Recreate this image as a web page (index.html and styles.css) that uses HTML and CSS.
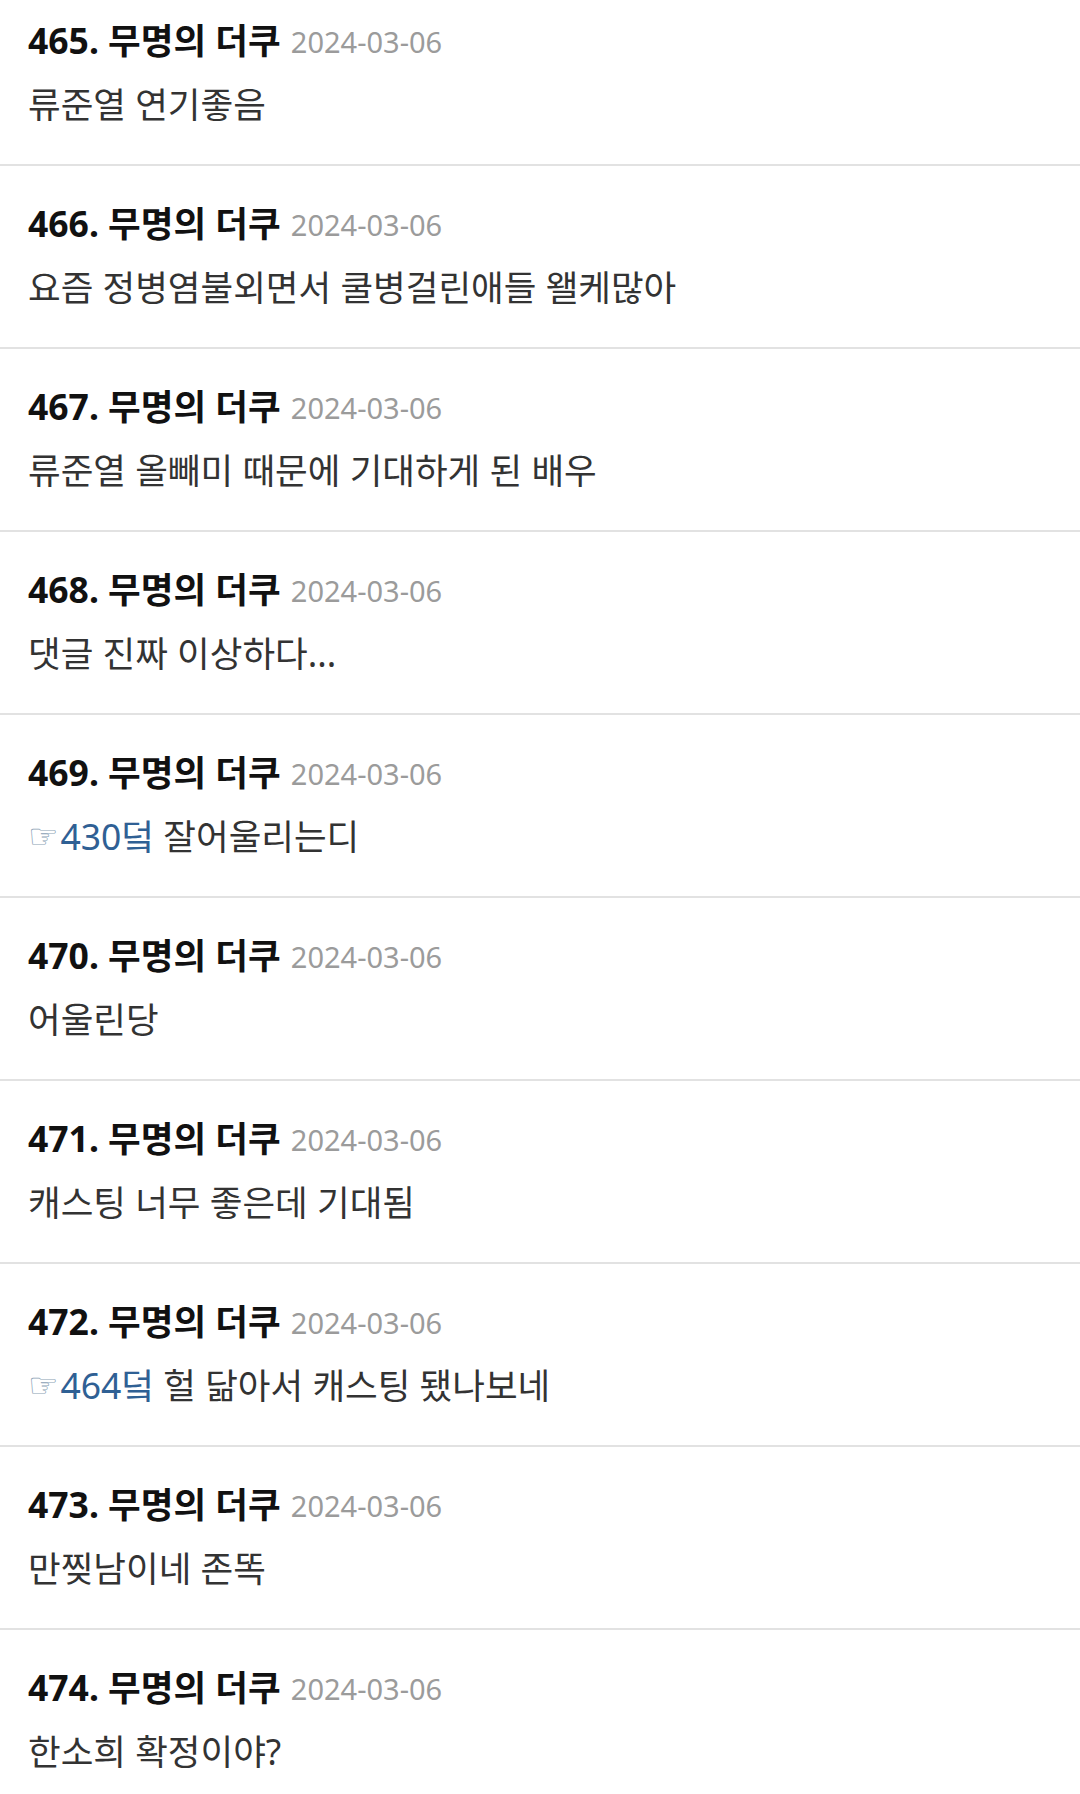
FILE: index.html
```html
<!DOCTYPE html>
<html>
	<head>
		<meta charset="UTF-8">
		<title>댓글</title>
		<link rel="stylesheet" href="styles.css">
	</head>
	<body>
		<div class="comments">
			<ul>
				<li>
					<p class="head"><b>465. 무명의 더쿠</b> <span class="date">2024-03-06</span></p>
					<p class="text">류준열 연기좋음</p>
				</li>
				<li>
					<p class="head"><b>466. 무명의 더쿠</b> <span class="date">2024-03-06</span></p>
					<p class="text">요즘 정병염불외면서 쿨병걸린애들 왤케많아</p>
				</li>
				<li>
					<p class="head"><b>467. 무명의 더쿠</b> <span class="date">2024-03-06</span></p>
					<p class="text">류준열 올빼미 때문에 기대하게 된 배우</p>
				</li>
				<li>
					<p class="head"><b>468. 무명의 더쿠</b> <span class="date">2024-03-06</span></p>
					<p class="text">댓글 진짜 이상하다...</p>
				</li>
				<li>
					<p class="head"><b>469. 무명의 더쿠</b> <span class="date">2024-03-06</span></p>
					<p class="text"><a href="javascript:;" class="ref"><i>☞</i>430덬</a> 잘어울리는디</p>
				</li>
				<li>
					<p class="head"><b>470. 무명의 더쿠</b> <span class="date">2024-03-06</span></p>
					<p class="text">어울린당</p>
				</li>
				<li>
					<p class="head"><b>471. 무명의 더쿠</b> <span class="date">2024-03-06</span></p>
					<p class="text">캐스팅 너무 좋은데 기대됨</p>
				</li>
				<li>
					<p class="head"><b>472. 무명의 더쿠</b> <span class="date">2024-03-06</span></p>
					<p class="text"><a href="javascript:;" class="ref"><i>☞</i>464덬</a> 헐 닮아서 캐스팅 됐나보네</p>
				</li>
				<li>
					<p class="head"><b>473. 무명의 더쿠</b> <span class="date">2024-03-06</span></p>
					<p class="text">만찢남이네 존똑</p>
				</li>
				<li>
					<p class="head"><b>474. 무명의 더쿠</b> <span class="date">2024-03-06</span></p>
					<p class="text">한소희 확정이야?</p>
				</li>
			</ul>
		</div>
	</body>
</html>
```

FILE: styles.css
```css
*{
	margin: 0;
	padding: 0;
}
li{
	list-style: none;
}
body{
	background: #FFFFFF;
	font-family: "Noto Sans", "Noto Sans CJK KR", sans-serif;
	overflow: hidden;
}
.comments{
	/* list is scrolled a little past the top */
	margin-top: -17px;
}
.comments li{
	padding: 35px 28px 38px;
	border-bottom: 2px solid #e2e2e2;
}
.comments .head{
	height: 44px;
	line-height: 44px;
	white-space: nowrap;
}
.comments .head b{
	font-size: 35.5px;
	font-weight: bold;
	color: #111111;
}
.comments .date{
	font-size: 29px;
	color: #9b9b9b;
	margin-left: 6px;
	vertical-align: 1px;
}
.comments .text{
	margin-top: 20px;
	height: 44px;
	line-height: 44px;
	font-size: 35.5px;
	color: #333333;
	white-space: nowrap;
}
.comments .ref{
	color: #2f6094;
	text-decoration: none;
}
.comments .ref i{
	font-style: normal;
	font-family: "DejaVu Sans", sans-serif;
	font-size: 34px;
	color: #8a9fb5;
	margin-right: 2px;
	vertical-align: 2px;
}
```
